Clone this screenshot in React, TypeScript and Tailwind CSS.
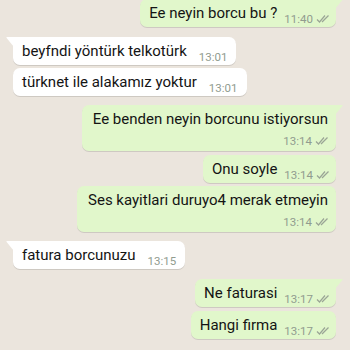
type Msg = {
  text: string
  time: string
  out: boolean
  tail?: boolean
  wrap?: boolean
  mt: string
}

const messages: Msg[] = [
  { text: 'Ee neyin borcu bu ?', time: '11:40', out: true, tail: true, mt: 'mt-[-1px]' },
  { text: 'beyfndi yöntürk telkotürk', time: '13:01', out: false, tail: true, mt: 'mt-[10px]' },
  { text: 'türknet ile alakamız yoktur', time: '13:01', out: false, mt: 'mt-[3px]' },
  { text: 'Ee benden neyin borcunu istiyorsun', time: '13:14', out: true, tail: true, wrap: true, mt: 'mt-[9px]' },
  { text: 'Onu soyle', time: '13:14', out: true, mt: 'mt-[4px]' },
  { text: 'Ses kayitlari duruyo4 merak etmeyin', time: '13:14', out: true, wrap: true, mt: 'mt-[3px]' },
  { text: 'fatura borcunuzu', time: '13:15', out: false, tail: true, mt: 'mt-[9px]' },
  { text: 'Ne faturasi', time: '13:17', out: true, tail: true, mt: 'mt-[10px]' },
  { text: 'Hangi firma', time: '13:17', out: true, mt: 'mt-[4px]' },
]

function Ticks() {
  return (
    <svg width="13" height="10" viewBox="0 0 13 10" className="ml-[3px]" fill="none" stroke="#9aa596" strokeWidth="1.2">
      <path d="M1 5.5 L3.5 8 L9 1.5" />
      <path d="M6 8 L12.5 1.5" />
    </svg>
  )
}

function Time({ m }: { m: Msg }) {
  return (
    <span className="flex items-center text-[11.5px] leading-[14px] text-[#919c8f]">
      {m.time}
      {m.out && <Ticks />}
    </span>
  )
}

function Bubble({ m }: { m: Msg }) {
  const bg = m.out ? 'bg-[#e1f7cb]' : 'bg-white'
  const corner = m.tail ? (m.out ? 'rounded-tr-none' : 'rounded-tl-none') : ''
  return (
    <div className={`flex ${m.out ? 'justify-end pr-[14px]' : 'justify-start pl-[13px]'} ${m.mt}`}>
      <div className={`relative rounded-[7px] ${corner} ${bg} shadow-[0_1px_0.5px_rgba(0,0,0,0.12)]`}>
        {m.tail && (
          <svg
            width="8"
            height="10"
            viewBox="0 0 8 10"
            className={`absolute top-0 ${m.out ? 'right-[-7px]' : 'left-[-7px]'}`}
          >
            <path d={m.out ? 'M0 0 H7 Q8 0 7.4 1 L0 10 Z' : 'M8 0 H1 Q0 0 0.6 1 L8 10 Z'} fill={m.out ? '#e1f7cb' : '#ffffff'} />
          </svg>
        )}
        {m.wrap ? (
          <div className="flex flex-col pl-[11px] pr-[8px] pt-[4px] pb-[3px]">
            <span className="text-[15px] leading-[20px] text-[#141414]">{m.text}</span>
            <span className="mt-[5px] flex justify-end">
              <Time m={m} />
            </span>
          </div>
        ) : (
          <div className={`flex items-end pl-[9px] pt-[4px] pb-[4px] ${m.out ? 'pr-[7px]' : 'pr-[9px]'}`}>
            <span className="text-[15px] leading-[20px] text-[#141414]">{m.text}</span>
            <span className={`mb-[-3px] ${m.out ? 'ml-[7px]' : 'ml-[12px]'}`}>
              <Time m={m} />
            </span>
          </div>
        )}
      </div>
    </div>
  )
}

export default function App() {
  return (
    <div className="h-[350px] w-[350px] overflow-hidden bg-[#ebe5dd] font-['Roboto','Liberation_Sans',sans-serif]">
      {messages.map((m, i) => (
        <Bubble key={i} m={m} />
      ))}
    </div>
  )
}
